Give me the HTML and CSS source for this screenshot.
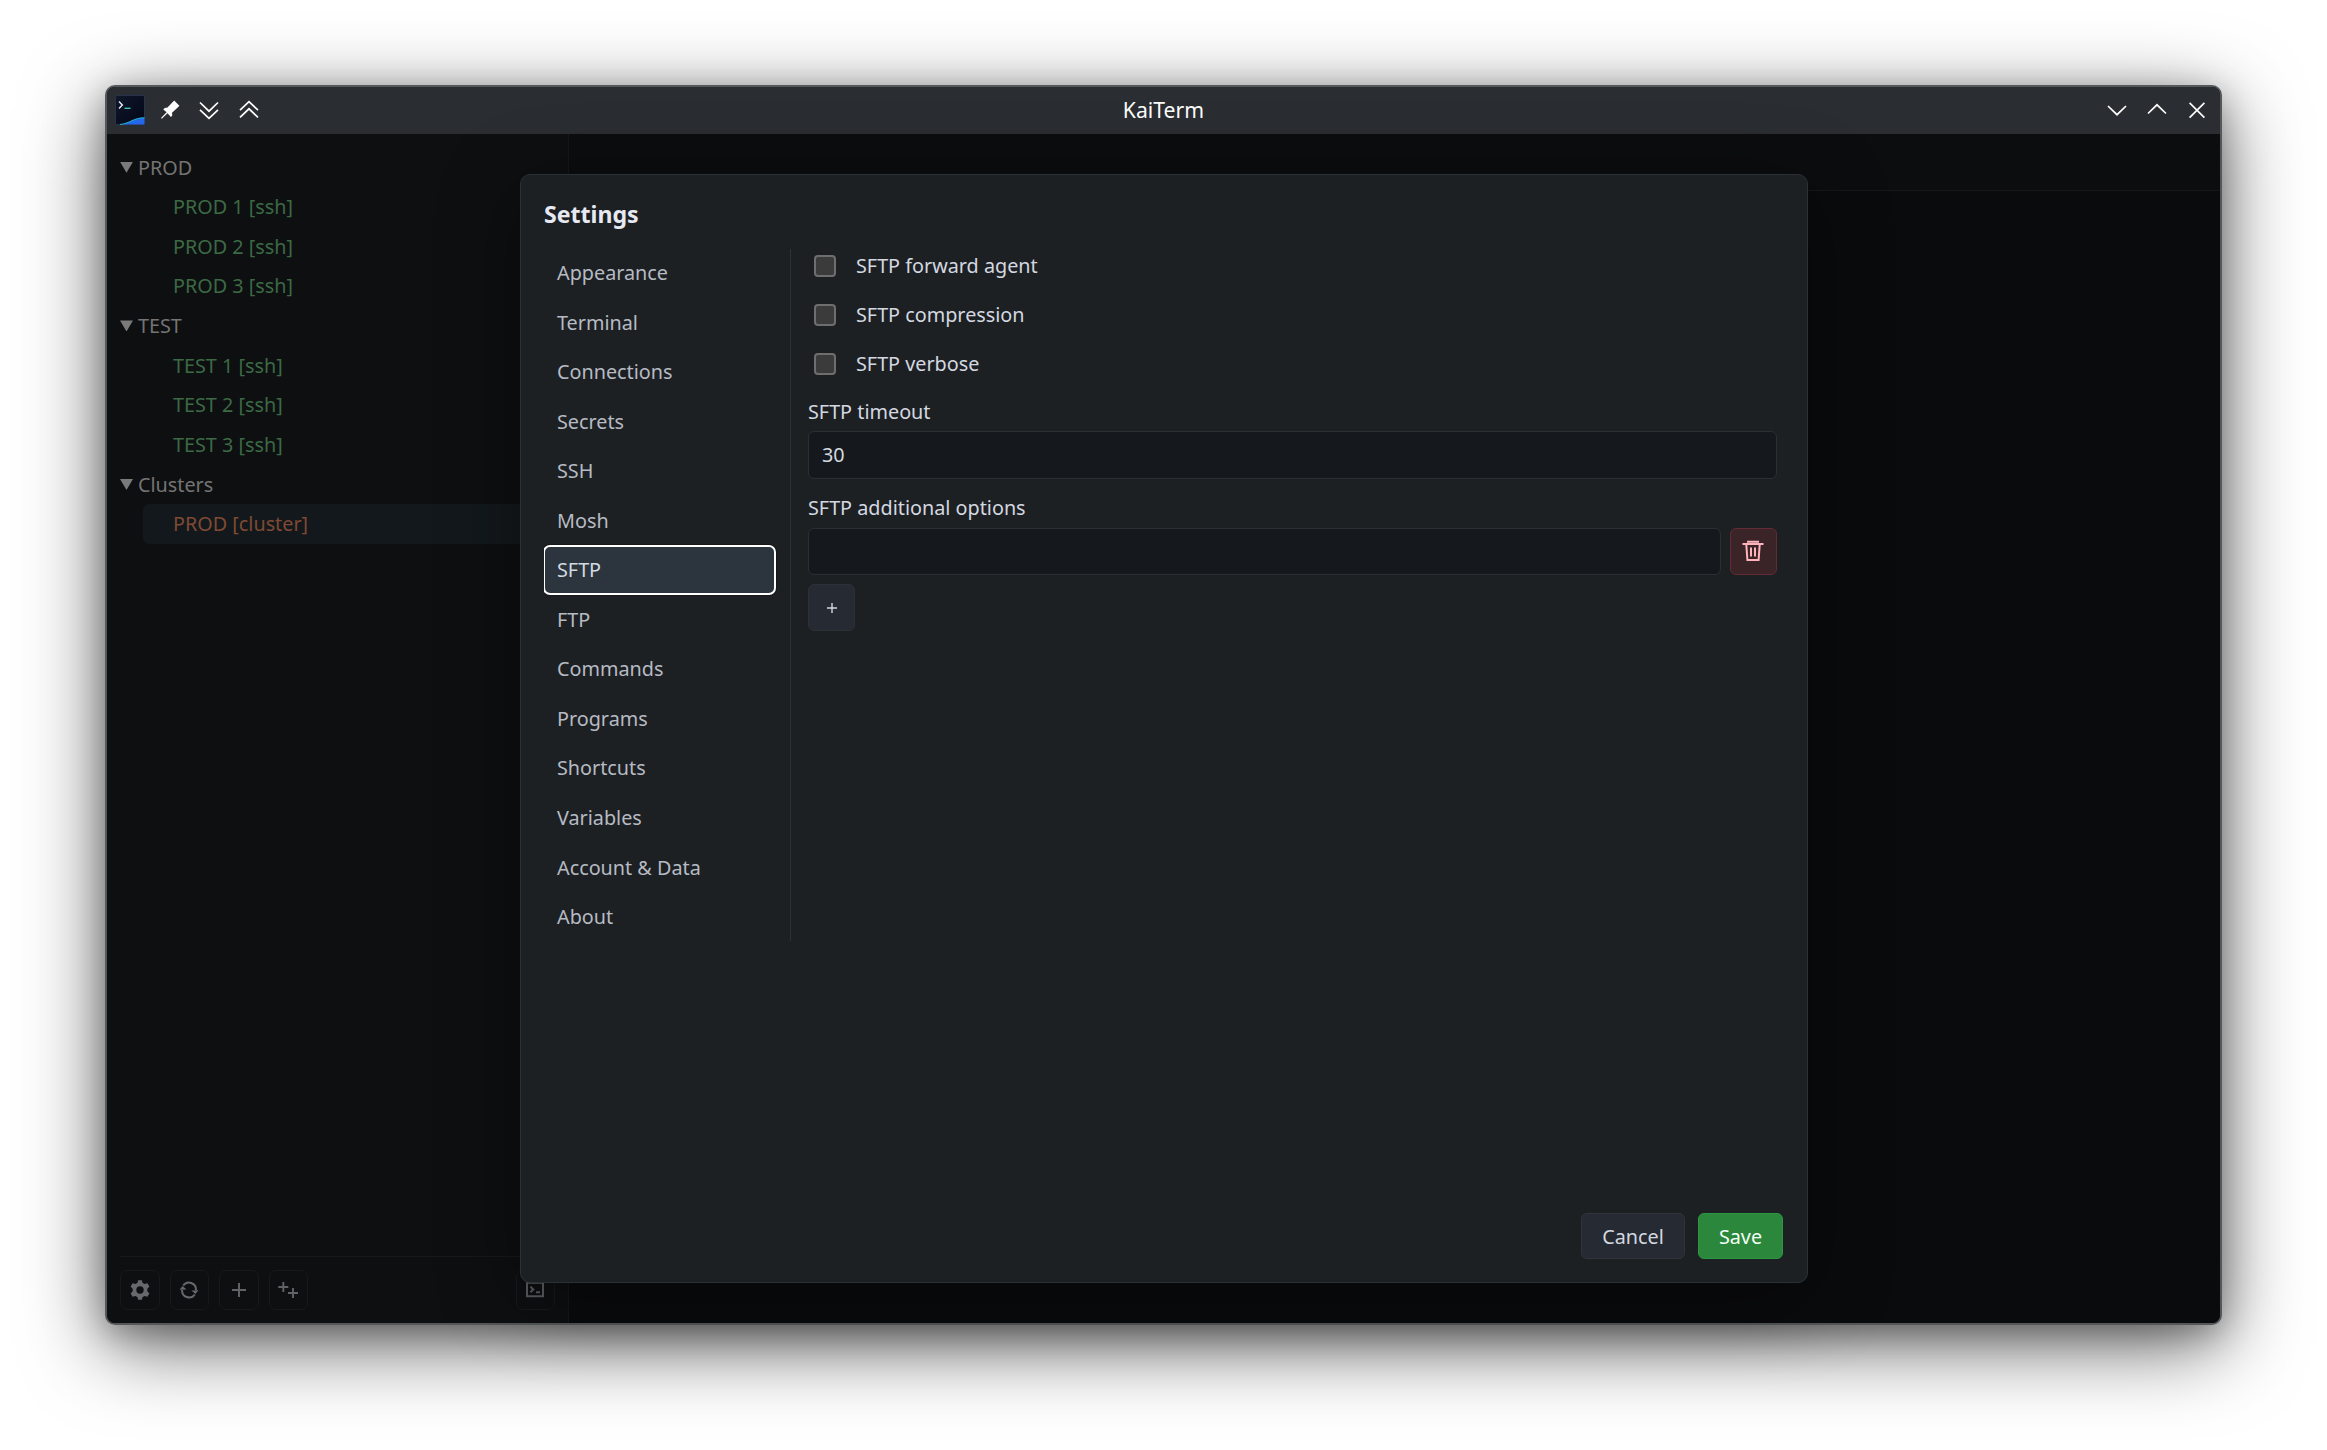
FILE: index.html
```html
<!DOCTYPE html>
<html lang="en">
<head>
<meta charset="utf-8">
<title>KaiTerm</title>
<link rel="stylesheet" href="styles.css">
</head>
<body>
<div class="window">
  <header class="titlebar">
    <div class="tools">
      <svg class="logo" width="30" height="30" viewBox="0 0 30 30"><defs><linearGradient id="lg" x1="0" y1="0" x2="1" y2="1"><stop offset="0" stop-color="#10182a"/><stop offset="1" stop-color="#020617"/></linearGradient></defs><rect x=".5" y=".5" width="29" height="29" rx="1.5" fill="url(#lg)" stroke="#28324a"/><path d="M5 29.5C15 28.500 19 22.500 29.500 22.800V29.500Z" fill="#2467eb"/><path d="M5 29.500C15 28.500 19 22.500 29.500 22.800" fill="none" stroke="#22b8cf"/><path d="M4 6.500L7.300 10L4 13.500" fill="none" stroke="#e2e8f0" stroke-width="1.500"/><path d="M9.500 13.300H15.500" stroke="#3fd0b8" stroke-width="1.300"/></svg>
      <svg class="pin" width="20" height="20" viewBox="0 0 20 20"><path d="M14.200 .4L19.400 5.800L18 7.200L12 12.700L12.300 15.500L10.900 17L7.500 13.300L1.800 18.800L1 18L6.600 12.300L3.300 9.500L4.700 8L7.500 7.600Z" fill="#fcfcfc"/></svg>
      <svg class="double" width="20" height="20" viewBox="0 0 20 20"><path d="M1 2.500L10 11.200L19 2.500M1 9.800L10 18.400L19 9.800"/></svg>
      <svg class="double" width="20" height="20" viewBox="0 0 20 20"><path d="M1 10.200L10 1.600L19 10.200M1 17.400L10 8.800L19 17.400"/></svg>
    </div>
    <div class="title">KaiTerm</div>
    <div class="controls">
      <svg width="20" height="20" viewBox="0 0 20 20"><path d="M1 6L10 14.700L19 6"/></svg>
      <svg width="20" height="20" viewBox="0 0 20 20"><path d="M1 13.500L10 4.800L19 13.500"/></svg>
      <svg width="20" height="20" viewBox="0 0 20 20"><path d="M2.600 2.800L17.400 17.600M17.400 2.800L2.600 17.600"/></svg>
    </div>
  </header>
  <div class="body">
    <aside class="sidebar">
      <div class="tree">
        <div class="group"><i></i>PROD</div>
        <div class="leaf">PROD 1 [ssh]</div>
        <div class="leaf">PROD 2 [ssh]</div>
        <div class="leaf">PROD 3 [ssh]</div>
        <div class="group"><i></i>TEST</div>
        <div class="leaf">TEST 1 [ssh]</div>
        <div class="leaf">TEST 2 [ssh]</div>
        <div class="leaf">TEST 3 [ssh]</div>
        <div class="group"><i></i>Clusters</div>
        <div class="leaf cluster">PROD [cluster]</div>
      </div>
      <div class="toolbar">
        <div class="tool"><svg width="20" height="20" viewBox="0 0 20 20"><path fill-rule="evenodd" fill="#66696c" d="M8 .2H12L12.400 2.800L14.500 3.900L17.400 3.200L19.400 6.600L17.300 8.800V11.200L19.400 13.400L17.400 16.800L14.500 16.100L12.400 17.200L12 19.800H8L7.600 17.200L5.500 16.100L2.600 16.800L.6 13.400L2.700 11.200V8.800L.6 6.600L2.600 3.200L5.500 3.900L7.600 2.800ZM10 6.300A3.700 3.700 0 1 0 10 13.700A3.700 3.700 0 1 0 10 6.300Z"/></svg></div>
        <div class="tool"><svg width="20" height="20" viewBox="0 0 20 20"><path d="M4.200 5.500A7 7 0 0 1 16.900 10M15.800 14.500A7 7 0 0 1 3.100 10" fill="none" stroke="#66696c" stroke-width="2"/><path d="M12.500 10.600L19.500 10.200L16.400 14ZM.5 9.800L7.500 9.400L3.600 6Z" fill="#66696c"/></svg></div>
        <div class="tool"><svg width="20" height="20" viewBox="0 0 20 20"><path d="M10 3V17M3 10H17" stroke="#606366" stroke-width="2"/></svg></div>
        <div class="tool"><svg width="20" height="20" viewBox="0 0 20 20"><path d="M5.300 2V12M.3 7H10.300M15 8V18M10 13H20" stroke="#606366" stroke-width="1.900"/></svg></div>
        <div class="tool last"><svg width="20" height="20" viewBox="0 0 20 20"><path d="M2 2.800H18V16.200H2ZM5.500 6.800L8.300 9.500L5.500 12.200M11 12.200H15" fill="none" stroke="#5a5d60" stroke-width="2"/></svg></div>
      </div>
    </aside>
    <main class="main"><div class="tabs"></div></main>
  </div>
  <section class="modal">
    <h1>Settings</h1>
    <div class="content">
      <nav>
        <a>Appearance</a><a>Terminal</a><a>Connections</a><a>Secrets</a><a>SSH</a><a>Mosh</a><a class="active">SFTP</a><a>FTP</a><a>Commands</a><a>Programs</a><a>Shortcuts</a><a>Variables</a><a>Account &amp; Data</a><a>About</a>
      </nav>
      <div class="form">
        <div class="check"><span></span>SFTP forward agent</div>
        <div class="check"><span></span>SFTP compression</div>
        <div class="check"><span></span>SFTP verbose</div>
        <div class="label">SFTP timeout</div>
        <div class="field timeout">30</div>
        <div class="label second">SFTP additional options</div>
        <div class="row">
          <div class="field"></div>
          <div class="square danger"><svg width="22" height="22" viewBox="0 0 22 22"><path d="M.5 4H21.500M6 2.800V1.700H16V2.800M4.300 4.500L5.400 20H16.600L17.700 4.500M9 7.500V16.500M13 7.500V16.500" fill="none" stroke="#ffb3bb" stroke-width="2"/></svg></div>
        </div>
        <div class="square add"><svg width="10" height="10" viewBox="0 0 10 10"><path d="M5 0V10M0 5H10" stroke="#d4d8e0" stroke-width="1.400"/></svg></div>
      </div>
    </div>
    <footer><div class="btn">Cancel</div><div class="btn save">Save</div></footer>
  </section>
</div>
</body>
</html>
```
FILE: styles.css
```css
* { box-sizing: border-box; }
body {
  margin: 0;
  padding: 85px 105px 125px;
  height: 1450px;
  background: #fff;
  font: 19.8px/28px "Noto Sans", sans-serif;
  overflow: hidden;
}
.window {
  position: relative;
  display: flex;
  flex-direction: column;
  width: 2117px;
  height: 1240px;
  border: 2px solid #54585b;
  border-radius: 10px;
  background: #0d0e10;
  box-shadow: 0 20px 80px rgba(0, 0, 0, .62), 0 8px 32px rgba(0, 0, 0, .26);
}
.titlebar {
  display: grid;
  grid-template-columns: 1fr auto 1fr;
  align-items: center;
  height: 47px;
  padding-bottom: 1px;
  background: #2a2d31;
  border-radius: 8px 8px 0 0;
  color: #fcfcfc;
}
.title { font-size: 21.200px; }
.tools { display: flex; align-items: center; padding-left: 8px; }
.logo { margin-right: 15px; }
.tools .pin { margin-right: 19px; }
.double { margin-right: 20px; }
.double path, .controls path { fill: none; stroke: #fcfcfc; stroke-width: 1.700; }
.controls { display: flex; justify-content: flex-end; gap: 20px; padding-right: 13px; }
.body { display: flex; flex: 1; border-radius: 0 0 8px 8px; overflow: hidden; }
.sidebar {
  display: flex;
  flex-direction: column;
  justify-content: space-between;
  width: 462px;
  border-right: 1px solid #151719;
  background: #0e0f11;
  padding: 13.500px 13px 13px;
}
.group, .leaf { height: 39.650px; line-height: 39.650px; }
.group { display: flex; align-items: center; gap: 5px; color: #747474; }
.group i { width: 13px; height: 11px; background: #7a7a7a; clip-path: polygon(0 0, 100% 0, 50% 100%); }
.leaf { color: #3b6a45; padding-left: 30px; margin-left: 23px; border-radius: 6px; }
.cluster { color: #7f4a33; background: #13181c; }
.toolbar {
  display: flex;
  gap: 10px;
  border-top: 1px solid #17191b;
  padding-top: 13px;
}
.tool {
  display: grid;
  place-items: center;
  width: 39.500px;
  height: 40px;
  border: 1px solid #17191b;
  border-radius: 7px;
}
.last { margin-left: auto; }
.main { flex: 1; background: #0a0b0d; }
.tabs { height: 57px; border-bottom: 1px solid #151718; background: #0c0d0f; }
.modal {
  position: absolute;
  left: 413px;
  top: 87px;
  width: 1288px;
  height: 1109px;
  display: flex;
  flex-direction: column;
  justify-content: space-between;
  padding: 22px 24px 23px 23px;
  border: 1px solid #2a3035;
  border-radius: 10px;
  background: #1d2023;
  box-shadow: 0 16px 80px rgba(0, 0, 0, .4);
  color: #d4d8e0;
}
h1 { margin: 0; font-size: 23.100px; line-height: 34px; font-weight: 700; color: #e6e9f2; }
.content { display: flex; flex: 1; align-items: flex-start; padding-top: 18px; }
nav {
  display: flex;
  flex-direction: column;
  gap: 2.050px;
  width: 247px;
  height: 692px;
  border-right: 1px solid #2e3236;
  padding-right: 15px;
  overflow: hidden;
}
nav a {
  height: 47.500px;
  line-height: 48px;
  padding-left: 13px;
  border-radius: 6px;
  color: #b6bbc3;
}
nav .active {
  background: #2c343d;
  color: #d4dae2;
  outline: 2px solid #fff;
  outline-offset: -1px;
  box-shadow: 0 0 0 2px #15171a;
}
.form { width: 969px; margin-left: 17px; }
.check { display: flex; align-items: center; height: 34px; margin-bottom: 15px; padding-left: 6px; }
.check span {
  width: 22px;
  height: 22px;
  margin-right: 20px;
  border: 2px solid #6e6e6e;
  border-radius: 4px;
  background: #3b3b3b;
}
.label { height: 35px; line-height: 32px; }
.label.second { margin-top: 14px; line-height: 30px; }
.field {
  flex: 1;
  height: 47px;
  padding-left: 13px;
  line-height: 46px;
  border: 1px solid #2b2f33;
  border-radius: 6px;
  background: #15181c;
}
.timeout { height: 48px; }
.row { display: flex; gap: 9px; }
.square { display: grid; place-items: center; width: 47px; height: 47px; border: 1px solid #2d3036; border-radius: 6px; background: #262a32; }
.danger { border-color: #632b34; background: #3a2428; }
.danger svg { margin: 0 2px 1px 0; }
.add { margin-top: 9px; }
footer { display: flex; justify-content: flex-end; gap: 13px; }
.btn {
  width: 104px;
  height: 46px;
  text-align: center;
  line-height: 46px;
  border: 1px solid #30333a;
  border-radius: 6px;
  background: #262a32;
}
.save { width: 85px; border-color: #2d963f; background: #2a873b; color: #f4fff6; }
```
